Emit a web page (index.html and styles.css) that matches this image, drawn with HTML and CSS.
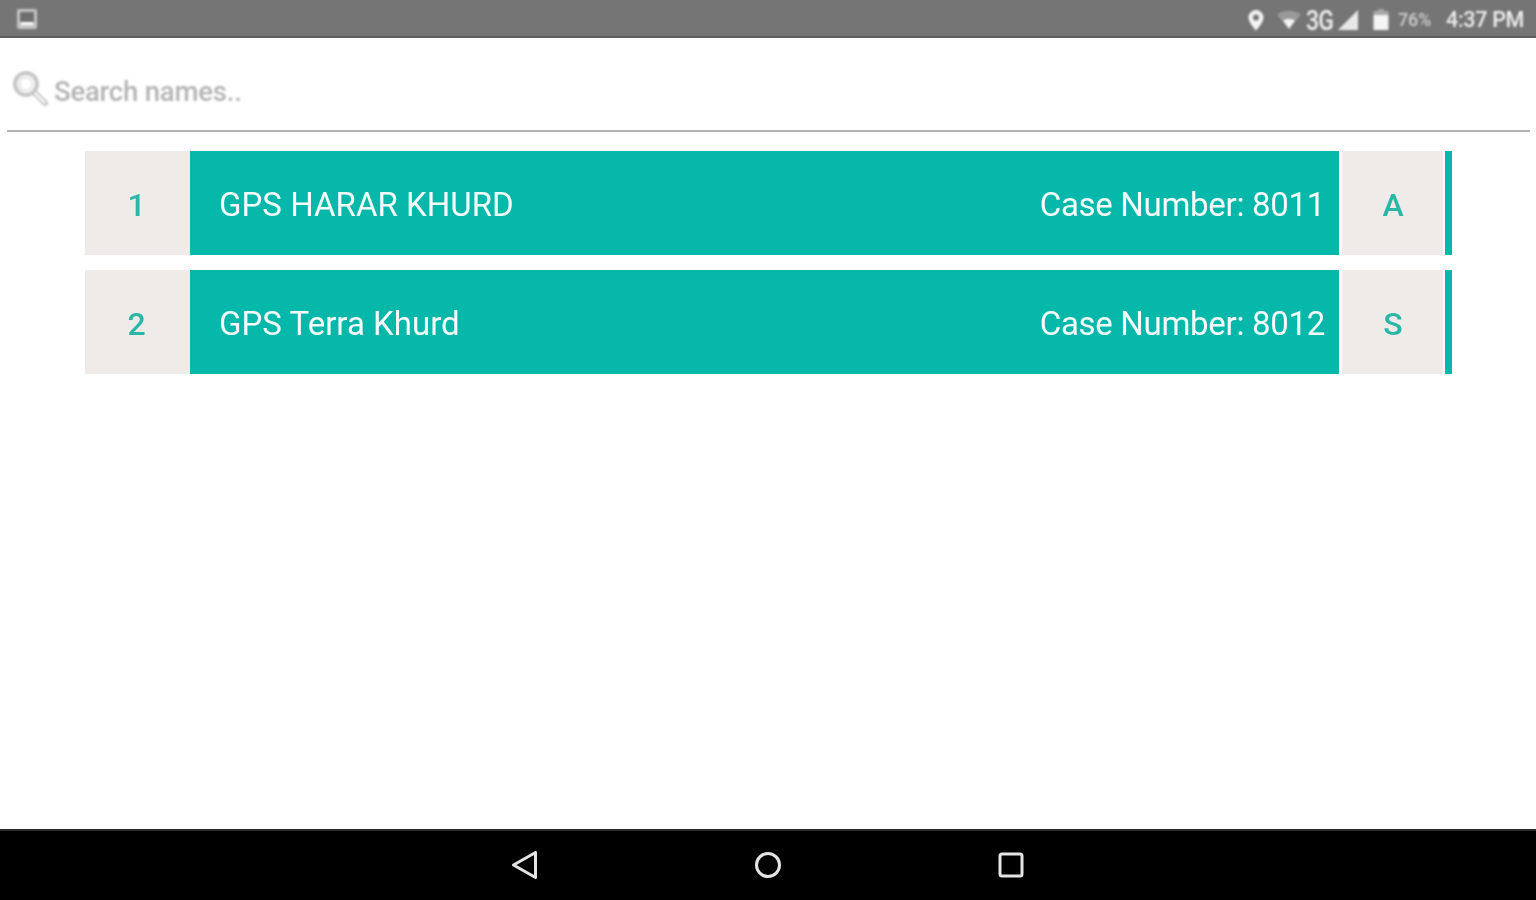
FILE: index.html
```html
<!DOCTYPE html>
<html lang="en">
<head>
<meta charset="utf-8">
<title>Search names</title>
<link rel="stylesheet" href="styles.css">
</head>
<body>
<div class="app">
  <header class="status">
    <svg class="status-thumb" width="22" height="22" viewBox="0 0 22 22"><rect x="1" y="1" width="20" height="20" rx="2" fill="#c4c4c4"/><rect x="4" y="4" width="14" height="10" fill="#6e6e6e"/><rect x="5" y="14" width="12" height="3" fill="#fff"/></svg>
    <div class="status-right">
      <svg class="pin" width="18" height="22" viewBox="0 0 18 22"><path fill-rule="evenodd" fill="#f4f4f4" d="M9 1a7.5 7.5 0 0 0-7.5 7.5C1.500 14 9 21.500 9 21.500S16.500 14 16.500 8.500A7.500 7.500 0 0 0 9 1zm0 4.500a3 3 0 1 1 0 6 3 3 0 0 1 0-6z"/></svg>
      <svg class="wifi" width="26" height="20" viewBox="0 0 26 20"><path fill="#9a9a9a" d="M1 4.500C8 -.5 18 -.5 25 4.500L13 19z"/><path fill="#f4f4f4" d="M7 10.500c3.500-2 8.500-2 12 0L13 19z"/></svg>
      <span class="net">3G</span>
      <svg class="signal" width="22" height="22" viewBox="0 0 22 22"><path fill="#e8e8e8" d="M21 1v20H1z"/></svg>
      <svg class="battery" width="16" height="22" viewBox="0 0 16 22"><rect x="5" y="0" width="6" height="3" fill="#a8a8a8"/><rect x="0.500" y="2" width="15" height="5" fill="#a8a8a8"/><rect x="0.500" y="6" width="15" height="15" fill="#f4f4f4"/></svg>
      <span class="pct">76%</span>
      <span class="time">4:37 PM</span>
    </div>
  </header>

  <main class="content">
    <div class="search">
      <svg class="search-icon" width="38" height="38" viewBox="0 0 38 38"><circle cx="15" cy="15" r="11" fill="none" stroke="#c6c6c6" stroke-width="4"/><circle cx="15" cy="15" r="6.500" fill="none" stroke="#e4e4e4" stroke-width="2"/><path d="M24 24l10 10" stroke="#c6c6c6" stroke-width="6" stroke-linecap="round"/><path d="M24.500 24.500l9 9" stroke="#fff" stroke-width="2.200" stroke-linecap="round"/></svg>
      <span class="search-text">Search names..</span>
    </div>

    <ul class="list">
      <li class="row">
        <div class="cell num"><span class="cell-text">1</span></div>
        <div class="main"><span class="name">GPS HARAR KHURD</span><span class="case">Case Number: 8011</span></div>
        <div class="cell flag"><span class="cell-text">A</span></div>
        <div class="stripe"></div>
      </li>
      <li class="row">
        <div class="cell num"><span class="cell-text">2</span></div>
        <div class="main"><span class="name">GPS Terra Khurd</span><span class="case">Case Number: 8012</span></div>
        <div class="cell flag"><span class="cell-text">S</span></div>
        <div class="stripe"></div>
      </li>
    </ul>
  </main>

  <nav class="navbar">
    <svg class="nav-icon" width="28" height="30" viewBox="0 0 28 30"><path d="M2.500 15L24.500 2.500v25z" fill="none" stroke="#e4e4e4" stroke-width="3" stroke-linejoin="round"/></svg>
    <svg class="nav-icon" width="28" height="30" viewBox="0 0 28 30"><circle cx="14" cy="15" r="11.500" fill="none" stroke="#e4e4e4" stroke-width="3"/></svg>
    <svg class="nav-icon" width="28" height="30" viewBox="0 0 28 30"><rect x="3" y="4" width="22" height="22" rx="2" fill="none" stroke="#e4e4e4" stroke-width="3"/></svg>
  </nav>
</div>
</body>
</html>
```
FILE: styles.css
```css
* { box-sizing: border-box; }
html, body { margin: 0; padding: 0; }
body { background: #fff; font-family: Roboto, "Liberation Sans", sans-serif; overflow: hidden; }

.app { width: 1536px; height: 900px; display: flex; flex-direction: column; }

.status {
  height: 38px;
  flex: none;
  background: #757575;
  border-bottom: 2px solid #5f5f5f;
  display: flex;
  align-items: center;
  justify-content: space-between;
  padding: 0 11px 0 16px;
  color: #f0f0f0;
}
.status-thumb { filter: blur(0.9px); margin-top: 2px; }
.status-right { display: flex; align-items: center; filter: blur(0.8px); padding-top: 3px; }
.pin { margin-right: 11px; margin-left: 3px; }
.wifi { margin-right: 4px; }
.net { font-size: 27px; font-weight: 500; width: 31px; letter-spacing: -1px; transform: scaleX(0.85); transform-origin: left center; line-height: 1; padding-top: 3px; }
.signal { margin-right: 14px; }
.battery { margin-right: 9px; }
.pct { font-size: 18px; color: #cfcfcf; width: 48px; font-weight: 500; letter-spacing: -0.2px; }
.time { font-size: 21.500px; font-weight: 500; letter-spacing: -0.3px; width: 79px; white-space: nowrap; }

.content { flex: 1; min-height: 0; padding: 0 6px 0 7px; }

.search {
  height: 94px;
  border-bottom: 2px solid #b4b4b4;
  display: flex;
  align-items: center;
  padding: 0 0 2px 5px;
}
.search-icon { filter: blur(0.8px); margin-top: 9px; margin-right: -1px; margin-left: -1px; }
.search-text { font-size: 27.500px; font-weight: 500; color: #b4b4b4; margin-left: 6px; filter: blur(0.8px); padding-top: 16px; letter-spacing: -0.2px; }

.list { list-style: none; margin: 19px 0 0 78px; padding: 0; width: 1367px; display: flex; flex-direction: column; gap: 15px; }
.row { height: 104px; display: flex; align-items: stretch; }

.cell {
  background: #efebe9;
  color: #2bb7a8;
  font-size: 32px;
  display: flex;
  align-items: center;
  justify-content: center;
}
.cell-text { filter: blur(0.7px); padding-top: 3px; font-weight: 500; }
.num { width: 105px; padding-right: 2px; }
.flag { width: 101px; margin-left: 3px; margin-right: 2px; padding-left: 1px; }

.main {
  flex: 1;
  background: #06b8aa;
  color: #f4fbfa;
  display: flex;
  align-items: center;
  justify-content: space-between;
  padding: 0 14px 0 29px;
  font-size: 33px;
  line-height: 1;
}
.name, .case { filter: blur(0.7px); white-space: nowrap; padding-top: 3px; }
.name { letter-spacing: 0.02px; }
.case { letter-spacing: -0.3px; }
.stripe { width: 7px; background: #06b8aa; }

.navbar {
  height: 71px;
  flex: none;
  background: #000;
  border-top: 2px solid #2a2a2a;
  display: flex;
  align-items: center;
  justify-content: center;
  gap: 215px;
  padding-bottom: 2px;
}
.nav-icon { filter: blur(0.7px); }
```
